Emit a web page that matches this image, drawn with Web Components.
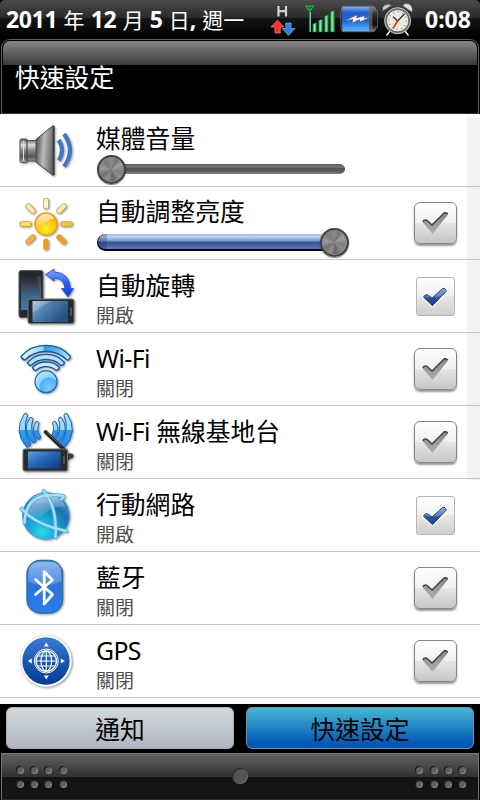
<!DOCTYPE html>
<html lang="zh-Hant">
<head>
<meta charset="utf-8">
<title>快速設定</title>
<style>
  html, body { margin: 0; padding: 0; background: #000; }
  body {
    width: 480px;
    height: 800px;
    overflow: hidden;
    font-family: "Noto Sans", "Noto Sans CJK TC", sans-serif;
  }
</style>
</head>
<body>
<quick-settings></quick-settings>

<script>
// Base helper: every component just renders a string into its shadow root
class BaseElement extends HTMLElement {
  constructor() {
    super();
    this.attachShadow({ mode: 'open' });
  }
  connectedCallback() {
    this.shadowRoot.innerHTML = this.render();
  }
}

/**
 * Status bar icons
 */
const statusIcons = {
  traffic: `
    <svg width="26" height="38" viewBox="270 0 26 38">
      <path d="M278.5 6v10.600M286 6v10.600M278.500 11.200h7.500" stroke="#d2d2d2" stroke-width="2.200" fill="none"/>
      <path d="M277.500 20l6.500 7h-3.700v6h-5.400v-6h-3.900z" fill="#f23030" stroke="#ff8d83" stroke-width=".6"/>
      <path d="M288.500 35.500l-6.300-7h3.600v-5.500h5.300v5.500h3.900z" fill="#2f7de8" stroke="#84b8fa" stroke-width=".6"/>
    </svg>`,
  signal: `
    <svg width="30" height="38" viewBox="305 0 30 38">
      <defs><linearGradient id="s"><stop offset="0" stop-color="#0d8a3c"/><stop offset=".45" stop-color="#a4e8ae"/><stop offset="1" stop-color="#087a34"/></linearGradient></defs>
      <path d="M306 6.200h7.500l-3.800 5zM309.800 7v25" fill="#073a16" stroke="#1ca34d" stroke-width="1.400"/>
      <path d="M310.500 12v20" stroke="#a0dcab" stroke-width=".8"/>
      <g fill="url(#s)" stroke="#07672c" stroke-width=".5">
        <path d="M312.700 24l4-1.500v9.500h-4z"/><path d="M318.400 20.500l4.200-1.600v13.100h-4.200z"/>
        <path d="M324.300 16.500l4.200-2v17.500h-4.200z"/><path d="M330.200 12l4.500-2v22h-4.500z"/>
      </g>
    </svg>`,
  battery: `
    <svg width="38" height="38" viewBox="340 0 38 38">
      <defs>
        <linearGradient id="b" x2="0" y2="1"><stop offset="0" stop-color="#7faef3"/><stop offset=".22" stop-color="#2360d2"/><stop offset=".55" stop-color="#1e63de"/><stop offset="1" stop-color="#54b5ff"/></linearGradient>
        <linearGradient id="k" x2="0" y2="1"><stop offset="0" stop-color="#8a8a8a"/><stop offset=".3" stop-color="#303030"/><stop offset=".7" stop-color="#0b0b0b"/><stop offset="1" stop-color="#777"/></linearGradient>
      </defs>
      <path d="M342.500 6.200h30q3.500 0 3.500 4h1.600v17.600H376q0 4-3.500 4h-30q-2-2-2-12.800t2-12.800z" fill="url(#k)" stroke="#777" stroke-width=".6"/>
      <path d="M343.500 7h25.700v24h-25.700q-1.800-2-1.800-12t1.800-12z" fill="url(#b)"/>
      <path d="M369 7h3.500v24H369z" fill="#777" opacity=".6"/>
      <path d="M344.500 20.800l13-6-1 3.300 8.500-2.600-1 2.600 7.300-1.300-12 5.400.6-2.700-8 3.400 1-3.400z" fill="#fff" stroke="#52585d" stroke-width=".6"/>
    </svg>`,
  alarm: `
    <svg width="32" height="38" viewBox="382 0 32 38">
      <path d="M390 31l-3.500 4.500M405 31l3.500 4.500" stroke="#eee" stroke-width="1.500"/>
      <path d="M382.800 11q-1.300-5 3.500-6.400 3-1 5.200 1z" fill="#c7c7c7" stroke="#555" stroke-width=".6"/>
      <path d="M402.500 5.600q2.500-3 6.200-1.500 4.500 2 3.300 8z" fill="#e3e3e3" stroke="#666" stroke-width=".6"/>
      <circle cx="397.600" cy="20.700" r="13" fill="#777" stroke="#c4c4c4"/>
      <circle cx="397.600" cy="20.700" r="11.200" fill="#ece9dd" stroke="#444" stroke-width=".8"/>
      <circle cx="397.600" cy="20.700" r="8.800" fill="none" stroke="#88877d" stroke-width="1.400" stroke-dasharray="1 3.600"/>
      <path d="M397.600 21l-4.600-4.200M397.600 21l7-7.200" stroke="#333" stroke-width="1.300"/>
      <path d="M397.800 20.500l-4.700 7.800" stroke="#f12b1c" stroke-width="1.600"/>
    </svg>`
};

class StatusBar extends BaseElement {
  render() {
    return `
      <style>
        :host {
          display: flex;
          align-items: flex-start;
          height: 39px;
          box-sizing: border-box;
          padding-left: 6px;
          border-radius: 5px 5px 0 0;
          background: linear-gradient(#4b4b4b 0, #292929 18px, #161616 18px, #000 37px);
          color: #fff;
          font-size: 21px;
          line-height: 38px;
          white-space: nowrap;
        }
        .date { width: 264px; height: 38px; word-spacing: .7px; }
        b, .time { font-family: "Noto Sans", sans-serif; font-weight: 700; font-size: 23px; letter-spacing: -.3px; }
        svg { display: block; flex: none; }
        .signal { margin-left: 9px; }
        .battery { margin-left: 5px; }
        .alarm { margin-left: 4px; }
        .time { margin-left: 11px; letter-spacing: 0; }
      </style>
      <div class="date"><b>2011</b> 年 <b>12</b> 月 <b>5</b> 日<b>,</b> 週一</div>
      <div>${statusIcons.traffic}</div>
      <div class="signal">${statusIcons.signal}</div>
      <div class="battery">${statusIcons.battery}</div>
      <div class="alarm">${statusIcons.alarm}</div>
      <div class="time">0:08</div>
    `;
  }
}
customElements.define('status-bar', StatusBar);

class PanelHeader extends BaseElement {
  render() {
    return `
      <style>
        :host {
          display: block;
          box-sizing: border-box;
          height: 75px;
          margin: 0 1px;
          padding: 1px 1px 0;
          border: 1px solid #606060;
          border-bottom-color: #333;
          border-radius: 9px 9px 0 0;
          background: #000;
        }
        div {
          box-sizing: border-box;
          height: 72px;
          padding: 17px 0 0 12px;
          border-radius: 7px 7px 0 0;
          background: linear-gradient(#858585 0, #3b3b3b 24px, #000 24px);
          color: #fff;
          font-size: 24.800px;
          line-height: 38px;
        }
      </style>
      <div><slot></slot></div>
    `;
  }
}
customElements.define('panel-header', PanelHeader);

/**
 * Row icons, all on a 60x60 grid
 */
const icons = {
  volume: `
    <defs>
      <linearGradient id="m" x2="0" y2="1"><stop offset="0" stop-color="#555"/><stop offset=".25" stop-color="#ddd"/><stop offset=".5" stop-color="#888"/><stop offset=".75" stop-color="#555"/><stop offset="1" stop-color="#aaa"/></linearGradient>
      <linearGradient id="c" x2="1" y2=".2"><stop offset="0" stop-color="#444"/><stop offset=".5" stop-color="#bbb"/><stop offset="1" stop-color="#666"/></linearGradient>
    </defs>
    <path d="M20.500 19.500L37 6q1.500-1 1.500 1v47q0 2-1.500 1L20.500 42z" fill="url(#c)" stroke="#444"/>
    <path d="M6 19h5l1 1.500h8.500v20.500H12l-1 1.500H6q-1.500 0-1.500-1.500V20.500Q4.500 19 6 19z" fill="url(#m)" stroke="#555"/>
    <path d="M11.500 20v21.500" stroke="#444" stroke-width="1.200"/>
    <path d="M8 21v20" stroke="#ddd" stroke-width="1"/>
    <path d="M38 6v49" stroke="#333" stroke-width="1.500"/>
    <path d="M43.200 20q6.800 10 0 20.500M48.500 14q12 16.500 0 32.500" fill="none" stroke="#3f77c6" stroke-width="4.200"/>`,
  sun: `
    <defs>
      <radialGradient id="g" cx=".5" cy=".7" r=".6"><stop offset="0" stop-color="#ffef20"/><stop offset=".6" stop-color="#ffca0c"/><stop offset="1" stop-color="#fba708"/></radialGradient>
      <linearGradient id="h" x2="0" y2="1"><stop offset="0" stop-color="#fff" stop-opacity=".8"/><stop offset="1" stop-color="#fff" stop-opacity=".1"/></linearGradient>
    </defs>
    <g stroke-linecap="round">
      <path d="M30.500 7.500v6M12.700 13.200l4.600 4.600M48.300 13.200l-4.600 4.600M6.500 31h7M54.500 31h-7M12.700 48.800l4.600-4.600M48.300 48.800l-4.600-4.600M30.500 54.500v-6" stroke="#c8a16a" stroke-width="5.600"/>
      <g stroke-width="4">
        <path d="M30.500 7.500v6" stroke="#fff5cb"/><path d="M12.700 13.200l4.600 4.600" stroke="#fff0a7"/><path d="M48.300 13.200l-4.600 4.600" stroke="#fff0a7"/>
        <path d="M6.500 31h7" stroke="#ffe049"/><path d="M54.500 31h-7" stroke="#e9c924"/>
        <path d="M12.700 48.800l4.600-4.600" stroke="#ffad2d"/><path d="M48.300 48.800l-4.600-4.600" stroke="#ff9914"/><path d="M30.500 54.500v-6" stroke="#ff9608"/>
      </g>
    </g>
    <circle cx="30.500" cy="31" r="11.300" fill="url(#g)" stroke="#e8960c"/>
    <path d="M20.500 31a10 10 0 0 1 18.500-5.500Q31 27 27 32t-6.500-1z" fill="url(#h)"/>`,
  rotate: `
    <defs>
      <linearGradient id="d" x2="0" y2="1"><stop offset="0" stop-color="#23282d"/><stop offset=".25" stop-color="#33414d"/><stop offset=".6" stop-color="#3d678c"/><stop offset="1" stop-color="#4777a2"/></linearGradient>
      <linearGradient id="e" x2="1" y2=".6"><stop offset="0" stop-color="#9ec5e4"/><stop offset=".4" stop-color="#4f83b2"/><stop offset="1" stop-color="#28507c"/></linearGradient>
      <linearGradient id="f" x2="0" y2="1"><stop offset="0" stop-color="#88a4fb"/><stop offset=".5" stop-color="#2b61f5"/><stop offset="1" stop-color="#1238c2"/></linearGradient>
    </defs>
    <rect x="3.500" y="4.500" width="24" height="47" rx="2" fill="#24272b" stroke="#595c60"/>
    <rect x="5.500" y="10" width="20" height="34" fill="url(#d)"/>
    <path d="M13 10h8l4.500 18V10z" fill="#fff" opacity=".09"/>
    <rect x="12.500" y="33" width="46" height="24.500" rx="2" fill="#26282b" stroke="#75777a"/>
    <rect x="17" y="35" width="35.500" height="21" fill="url(#e)"/>
    <path d="M17 35h18L17 46.500z" fill="#fff" opacity=".18"/>
    <path d="M55.500 41.500v8" stroke="#888" stroke-width="1"/>
    <path d="M30 8.500L38.500 3v3Q54 6.500 55 22.500h3L52.500 31 46 22.500h3.500Q48.500 12.500 38.500 12v3z" fill="url(#f)" stroke="#2a57dc" stroke-width=".9"/>`,
  wifi: `
    <defs>
      <linearGradient id="w" x1="0" x2="1"><stop offset="0" stop-color="#e2f3ff"/><stop offset=".45" stop-color="#9bd5fa"/><stop offset=".46" stop-color="#2b9df3"/><stop offset=".75" stop-color="#5dbbf9"/><stop offset="1" stop-color="#d2edff"/></linearGradient>
      <radialGradient id="x" cx=".65" cy=".75" r=".8"><stop offset="0" stop-color="#7fcaff"/><stop offset=".5" stop-color="#4cb0f7"/><stop offset=".6" stop-color="#94d3fb"/><stop offset="1" stop-color="#bce5ff"/></radialGradient>
    </defs>
    <g fill="url(#w)" stroke="#17599a" stroke-width="1.300" stroke-linejoin="round">
      <path d="M5.500 17.500Q15 6.300 30.500 6.300t24.500 11.200q-1.500 4-3.500 3.500Q43 12.500 30.500 12.500T9.500 21q-3-.5-4-3.500z"/>
      <path d="M12 23.500q7-8.200 18.500-8.200T49 23.500q-1 3-3.500 3Q39.500 20.500 30.500 20.500T15.500 26.500q-2.500 0-3.500-3z" fill="#b4e0fc"/>
      <path d="M17 28.500q5-5.500 13.500-5.500T44 28.500q-1 3-3.500 3-4-3.800-10-3.800t-10 3.800q-2.500 0-3.500-3z" fill="#cbeaff"/>
    </g>
    <circle cx="30.500" cy="42.700" r="11" fill="url(#x)" stroke="#1c6cad" stroke-width="1.200"/>`,
  hotspot: `
    <defs>
      <linearGradient id="n" x2=".9" y2="1"><stop offset="0" stop-color="#5ba4dc"/><stop offset=".5" stop-color="#2565b4"/><stop offset="1" stop-color="#123d88"/></linearGradient>
      <linearGradient id="v" x2="0" y2="1"><stop offset="0" stop-color="#a4dbfd"/><stop offset=".5" stop-color="#9ad7ff"/><stop offset=".5" stop-color="#2a9df5"/><stop offset="1" stop-color="#2588e4"/></linearGradient>
      <g id="waves" fill="url(#v)" stroke="#1f66a9" stroke-width="1" stroke-linejoin="round">
        <path d="M9 1.500q3-.5 3 2-6 15 3.500 28-.5 3-4 4Q-3 19.500 9 1.500z"/>
        <path d="M14.500 5.500q3-.5 3 2-4 10.500 3.500 20.500-1 3-3.500 3Q5.500 18.500 14.500 5.500z"/>
        <path d="M20.500 9.500q2.500-.5 3 1.500-3 7.500 2 14-.5 2.500-3 2.500-8-8.500-2-18z"/>
      </g>
    </defs>
    <use href="#waves"/>
    <use href="#waves" transform="matrix(-1 0 0 1 60.500 0)"/>
    <path d="M30 20L50 39" stroke="#1f2124" stroke-width="3.600" stroke-linecap="round"/>
    <path d="M31 20l15 14" stroke="#73777a" stroke-width=".8"/>
    <path d="M50 37.500h2l1 4h3q2 0 2 3-.5 2.500-3 2l-2 2h-3z" fill="#3b3e41"/>
    <rect x="7.500" y="37" width="44.500" height="22" rx="2" fill="#292b2f" stroke="#6d7074"/>
    <rect x="12.500" y="39.500" width="32.500" height="17" fill="url(#n)"/>
    <path d="M48.500 44v8" stroke="#777" stroke-width="1"/>`,
  globe: `
    <defs>
      <radialGradient id="o" cx=".42" cy=".85" r=".85"><stop offset="0" stop-color="#27d8ec"/><stop offset=".4" stop-color="#1aa0d0"/><stop offset=".7" stop-color="#1f70b0"/><stop offset="1" stop-color="#4c98cc"/></radialGradient>
      <linearGradient id="p" x2=".5" y2="1"><stop offset="0" stop-color="#fff" stop-opacity=".8"/><stop offset="1" stop-color="#fff" stop-opacity="0"/></linearGradient>
    </defs>
    <circle cx="30.500" cy="30.900" r="23.500" fill="url(#o)" stroke="#4b9dc9" stroke-width=".8"/>
    <path d="M10 27Q14 9 30 8.500 44 9 50 22 38 20 29 29T10 27z" fill="url(#p)"/>
    <g fill="none" stroke-linecap="round">
      <path d="M28 6q14 16 12 46M6 23.500Q20 40 51 46M9 38Q10 12 32 10.500T46 14" stroke="#52aad3" stroke-width="3.800"/>
      <path d="M28 6q14 16 12 46M6 23.500Q20 40 51 46M9 38Q10 12 32 10.500T46 14" stroke="#a8e0f6" stroke-width="2.300"/>
    </g>`,
  bluetooth: `
    <defs>
      <linearGradient id="q" x2="0" y2="1"><stop offset="0" stop-color="#3f82dc"/><stop offset=".5" stop-color="#2a74e0"/><stop offset="1" stop-color="#2b7df0"/></linearGradient>
      <linearGradient id="r" x2="0" y2="1"><stop offset="0" stop-color="#a8c8f0"/><stop offset="1" stop-color="#5993e4"/></linearGradient>
    </defs>
    <rect x="11.500" y="2.500" width="35.500" height="52.500" rx="13.500" fill="url(#q)" stroke="#27749f" stroke-width="1.400"/>
    <path d="M12.700 24v-8q0-12.300 12.300-12.300h8.500q12.300 0 12.300 12.300v7Q33 31 12.700 24z" fill="url(#r)" opacity=".75"/>
    <path d="M20 21.500l17 15-8.300 9.500V13.500l8.300 8.500-17 14.500" fill="none" stroke="#fff" stroke-width="2.700" stroke-linejoin="round" stroke-linecap="round"/>`,
  gps: `
    <defs><linearGradient id="t" x2="0" y2="1"><stop offset="0" stop-color="#3b7bd6"/><stop offset=".5" stop-color="#1a58b5"/><stop offset="1" stop-color="#053a92"/></linearGradient></defs>
    <circle cx="30.500" cy="30" r="25.700" fill="#fff" stroke="#ddd" stroke-width=".6"/>
    <circle cx="30.500" cy="30" r="23.700" fill="url(#t)"/>
    <g fill="none" stroke="#fff" stroke-width="1.200">
      <circle cx="30.800" cy="30" r="12" stroke-width="1"/>
      <circle cx="30.800" cy="30" r="10.200" stroke-width="1.300"/>
      <ellipse cx="30.800" cy="30" rx="5.300" ry="10"/>
      <path d="M30.800 20v20M20.500 30h20.600M22 25h17.600M22 35h17.600"/>
    </g>
    <path d="M30.800 11.500l2.500 4h-5zM30.800 48.500l2.500-4h-5zM12.300 30l4-2.500v5zM49.300 30l-4-2.500v5z" fill="#fff"/>`
};

class SettingIcon extends BaseElement {
  render() {
    return `
      <style>
        :host { display: block; width: 60px; height: 60px; }
        svg { display: block; overflow: visible; filter: drop-shadow(1px 1.500px 1px rgba(0,0,0,0.4)); }
      </style>
      <svg width="60" height="60" viewBox="0.500 0 60 60">${icons[this.getAttribute('name')]}</svg>
    `;
  }
}
customElements.define('setting-icon', SettingIcon);

/**
 * Check button, "on" is the smaller flat box with a blue tick
 */
class CheckToggle extends BaseElement {
  render() {
    const on = this.hasAttribute('on');
    return `
      <style>
        :host { display: flex; width: 44px; height: 44px; align-items: center; justify-content: center; }
        .box {
          box-sizing: border-box;
          width: ${on ? 39 : 43}px;
          height: ${on ? 39 : 42}px;
          border: 1px solid ${on ? '#b5b5b5' : '#868686'};
          border-radius: ${on ? 3 : 6}px;
          background: linear-gradient(#fff 0, #f0f0f0 50%, #e6e6e6 50%, ${on ? '#cfcfcf' : '#c6c6c6'} 100%);
          box-shadow: ${on ? 'none' : '0 2px 2px rgba(0,0,0,0.4)'};
          display: flex;
          align-items: center;
          justify-content: center;
          margin-top: ${on ? 1 : 0}px;
        }
        svg { display: block; flex: none; overflow: visible; }
      </style>
      <div class="box">
        ${on ? `
          <svg width="26" height="20" viewBox="0 0 26 20">
            <defs><linearGradient id="a" x2="0" y2="1"><stop offset="0" stop-color="#8fb0e4"/><stop offset=".45" stop-color="#5a80c2"/><stop offset=".55" stop-color="#29529f"/><stop offset="1" stop-color="#1c4288"/></linearGradient></defs>
            <path d="M1.800 10.200l3.200-2.500 5 3.500L20.500 1.500l3.800 1.700v2.300L10.500 18.500z" fill="#fff" stroke="#fff" stroke-width="3.500" stroke-linejoin="round"/>
            <path d="M1.500 10.200q1-3 4-2.500L10 11 20.500 1.500q3.200-.7 3.700 2.700L10.500 18.800z" fill="url(#a)" stroke="#2c406b" stroke-width="1" stroke-linejoin="round"/>
          </svg>` : `
          <svg width="26" height="24" viewBox="0 0 26 24">
            <defs><linearGradient id="a" x2="0" y2="1"><stop offset="0" stop-color="#858585"/><stop offset="1" stop-color="#b0b0b0"/></linearGradient></defs>
            <path d="M.5 11q1.500-3 4.500-2l5 4.500L22 1.500q3-1 4 2L10.500 23z" fill="url(#a)"/>
            <path d="M.8 10.800q1.500-2.500 4.200-1.500l5 4.700L22 2q2.300-1 3.700 1" fill="none" stroke="#404040" stroke-width="1.400"/>
          </svg>`}
      </div>
    `;
  }
}
customElements.define('check-toggle', CheckToggle);

class LevelSlider extends BaseElement {
  render() {
    const full = this.getAttribute('value') === '100';
    return `
      <style>
        :host { display: flex; width: 253px; height: 30px; align-items: center; }
        .track {
          height: 10px;
          background: linear-gradient(#606060 0, #777 30%, #505050 48%, #606060 75%, #858585 100%);
        }
        .track.full {
          box-sizing: border-box;
          height: 17px;
          border: 1px solid #000;
          border-width: 0 0 2px 1px;
          background:
            linear-gradient(90deg, rgba(20,40,90,0.25) 9px, transparent 9px),
            linear-gradient(#a5bfe9 0, #bdd1f4 20%, #6f8fc9 48%, #38538e 55%, #557ac0 100%);
        }
        .knob {
          box-sizing: border-box;
          flex: none;
          width: 29px;
          height: 29px;
          border: 2px solid #424242;
          border-radius: 50%;
          background: conic-gradient(#888, #747474 8%, #a0a0a0 17%, #808080 28%, #8d8d8d 37%, #666 48%, #8e8e8e 57%, #707070 66%, #999 77%, #7a7a7a 88%, #888);
          box-shadow: inset 0 0 0 1px #8c8c8c, 0 1px 1px rgba(0,0,0,0.5);
        }
        .track { order: ${full ? 0 : 1}; ${full ? 'width: 238px; margin-left: 1px; border-radius: 9px 0 0 9px;' : 'width: 233px; border-radius: 0 5px 5px 0;'} }
        .knob { ${full ? 'margin-left: -14px;' : 'margin: 0 -14px 0 1px; position: relative; z-index: 1;'} }
      </style>
      <div class="track ${full ? 'full' : ''}"></div>
      <div class="knob"></div>
    `;
  }
}
customElements.define('level-slider', LevelSlider);

class SettingRow extends BaseElement {
  render() {
    const sub = this.getAttribute('sub');
    // latin words run slightly wide
    const title = this.getAttribute('label').replace(/^[A-Z][\w-]+/, m => `<span class="latin">${m}</span>`);
    return `
      <style>
        :host {
          display: flex;
          align-items: flex-start;
          box-sizing: border-box;
          height: 73px;
          padding: 6px 23px 0 16px;
          border-bottom: 1px solid #c6c6c6;
          color: #000;
        }
        .text { flex: 1; margin-left: 20px; padding-top: ${sub ? 3 : 2}px; }
        .title { font-size: 24.800px; line-height: 32px; height: 33px; }
        .latin { letter-spacing: -.6px; }
        .sub { font-size: 19px; line-height: 29px; color: #505050; }
        .check { padding-top: 8px; }
        ::slotted(level-slider) { margin-top: -1px; }
      </style>
      <setting-icon name="${this.getAttribute('icon')}"></setting-icon>
      <div class="text">
        <div class="title">${title}</div>
        ${sub ? `<div class="sub">${sub}</div>` : `<slot></slot>`}
      </div>
      <div class="check"><slot name="check"></slot></div>
    `;
  }
}
customElements.define('setting-row', SettingRow);

class TabButton extends BaseElement {
  render() {
    const active = this.hasAttribute('active');
    return `
      <style>
        :host {
          display: block;
          flex: 1;
          box-sizing: border-box;
          height: 42px;
          border: 1px solid ${active ? '#6a8fae' : '#a9aeb3'};
          border-radius: 6px;
          background: ${active ? 'linear-gradient(#46b9d4, #0458b6 88%)' : 'linear-gradient(#d2dadd, #afb6c0)'};
          color: #000;
          font-size: 24.800px;
          line-height: 42px;
          text-align: center;
        }
      </style>
      <slot></slot>
    `;
  }
}
customElements.define('tab-button', TabButton);

class DragHandle extends BaseElement {
  render() {
    const dots = `<div class="dots">${'<i></i>'.repeat(8)}</div>`;
    return `
      <style>
        :host {
          display: flex;
          justify-content: space-between;
          box-sizing: border-box;
          height: 47px;
          margin: 0 1px;
          padding: 12px 12px 0 14px;
          border: 1px solid #777;
          border-bottom-color: #2b2b2b;
          background: linear-gradient(#626262 0, #303030 23px, #141414 23px);
        }
        .dots { display: grid; grid-template-columns: repeat(4, 8px); grid-auto-rows: 8px; gap: 6px 6.200px; }
        i { border-radius: 50%; background: #626262; box-shadow: inset 1px 1px 1px #111, 1px 1px 0 #888; width: 7px; height: 7px; }
        .home { box-sizing: border-box; width: 16px; height: 16px; margin: 2px 2px 0 0; border-radius: 50%; background: #545454; box-shadow: inset 1px 1px 1px #222, inset -1px -1px 0 #656565; }
      </style>
      ${dots}
      <div class="home"></div>
      ${dots}
    `;
  }
}
customElements.define('drag-handle', DragHandle);

// Data
const settings = [
  { icon: 'volume', label: '媒體音量', level: 0 },
  { icon: 'sun', label: '自動調整亮度', level: 100, check: 'off' },
  { icon: 'rotate', label: '自動旋轉', sub: '開啟', check: 'on' },
  { icon: 'wifi', label: 'Wi-Fi', sub: '關閉', check: 'off' },
  { icon: 'hotspot', label: 'Wi-Fi 無線基地台', sub: '關閉', check: 'off' },
  { icon: 'globe', label: '行動網路', sub: '開啟', check: 'on' },
  { icon: 'bluetooth', label: '藍牙', sub: '關閉', check: 'off' },
  { icon: 'gps', label: 'GPS', sub: '關閉', check: 'off' }
];

class QuickSettings extends BaseElement {
  render() {
    const rows = settings.map(item => `
      <setting-row icon="${item.icon}" label="${item.label}" ${item.sub ? `sub="${item.sub}"` : ''}>
        ${item.level !== undefined ? `<level-slider value="${item.level}"></level-slider>` : ''}
        ${item.check ? `<check-toggle slot="check" ${item.check === 'on' ? 'on' : ''}></check-toggle>` : ''}
      </setting-row>`).join('');

    return `
      <style>
        :host { display: flex; flex-direction: column; width: 480px; height: 800px; background: #000; overflow: hidden; }
        .list {
          height: 590px;
          overflow: hidden;
          background: linear-gradient(#f3f3f5, #f3f3f5) 467px 3px / 13px 363px no-repeat #fff;
        }
        .tabs { display: flex; gap: 12px; height: 49px; box-sizing: border-box; padding: 3px 6px 0; }
      </style>
      <status-bar></status-bar>
      <panel-header>快速設定</panel-header>
      <div class="list">${rows}</div>
      <div class="tabs">
        <tab-button>通知</tab-button>
        <tab-button active>快速設定</tab-button>
      </div>
      <drag-handle></drag-handle>
    `;
  }
}
customElements.define('quick-settings', QuickSettings);
</script>
</body>
</html>
